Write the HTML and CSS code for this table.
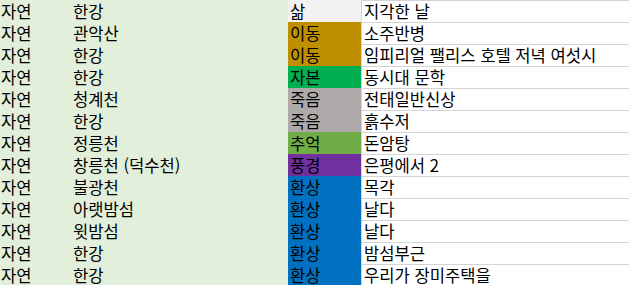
FILE: index.html
```html
<!DOCTYPE html>
<html lang="ko">
<head>
<meta charset="utf-8">
<link rel="stylesheet" href="styles.css">
</head>
<body>
<div class="sheet">
  <div class="row"><div class="c a">자연</div><div class="c b">한강</div><div class="c cat life">삶</div><div class="c d">지각한 날</div></div>
  <div class="row"><div class="c a">자연</div><div class="c b">관악산</div><div class="c cat move">이동</div><div class="c d">소주반병</div></div>
  <div class="row"><div class="c a">자연</div><div class="c b">한강</div><div class="c cat move">이동</div><div class="c d">임피리얼 팰리스 호텔 저녁 여섯시</div></div>
  <div class="row"><div class="c a">자연</div><div class="c b">한강</div><div class="c cat capital">자본</div><div class="c d">동시대 문학</div></div>
  <div class="row"><div class="c a">자연</div><div class="c b">청계천</div><div class="c cat death">죽음</div><div class="c d">전태일반신상</div></div>
  <div class="row"><div class="c a">자연</div><div class="c b">한강</div><div class="c cat death">죽음</div><div class="c d">흙수저</div></div>
  <div class="row"><div class="c a">자연</div><div class="c b">정릉천</div><div class="c cat memory">추억</div><div class="c d">돈암탕</div></div>
  <div class="row"><div class="c a">자연</div><div class="c b">창릉천 (덕수천)</div><div class="c cat scene">풍경</div><div class="c d">은평에서 2</div></div>
  <div class="row"><div class="c a">자연</div><div class="c b">불광천</div><div class="c cat fantasy">환상</div><div class="c d">목각</div></div>
  <div class="row"><div class="c a">자연</div><div class="c b">아랫밤섬</div><div class="c cat fantasy">환상</div><div class="c d">날다</div></div>
  <div class="row"><div class="c a">자연</div><div class="c b">윗밤섬</div><div class="c cat fantasy">환상</div><div class="c d">날다</div></div>
  <div class="row"><div class="c a">자연</div><div class="c b">한강</div><div class="c cat fantasy">환상</div><div class="c d">밤섬부근</div></div>
  <div class="row"><div class="c a">자연</div><div class="c b">한강</div><div class="c cat fantasy">환상</div><div class="c d">우리가 장미주택을</div></div>
</div>
</body>
</html>
```
FILE: styles.css
```css
html, body {
  margin: 0;
  padding: 0;
  background: #ffffff;
  overflow: hidden;
}
.sheet {
  width: 629px;
  font-family: "Noto Sans CJK KR", "Noto Sans", sans-serif;
  font-size: 16.6px;
  color: #000000;
}
.row {
  display: grid;
  grid-template-columns: 71px 217px 73px 1fr;
  height: 22px;
}
.c {
  box-sizing: border-box;
  height: 22px;
  padding-top: 1px;
  line-height: 21px;
  white-space: nowrap;
}
.a {
  background: #e2efda;
  padding-left: 1px;
}
.b {
  background: #e2efda;
  padding-left: 2px;
}
.cat {
  padding-left: 2px;
}
.d {
  background: #ffffff;
  border-top: 1px solid #d4d4d4;
  border-left: 1px solid #d4d4d4;
  padding-top: 0;
  padding-left: 2px;
  line-height: 21px;
}
.life { background: #f2f2f2; }
.move { background: #bf8f00; }
.capital { background: #00b050; }
.death { background: #aeaaaa; }
.memory { background: #70ad47; }
.scene { background: #7030a0; }
.fantasy { background: #0070c0; }
```
